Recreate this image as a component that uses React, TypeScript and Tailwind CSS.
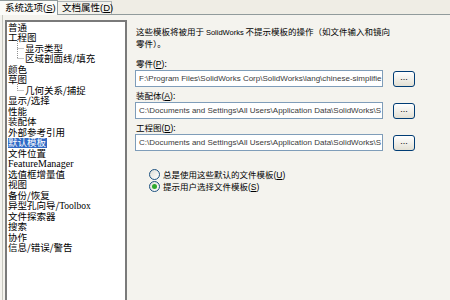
import React from "react";

const cjk = '"Noto Sans CJK SC", "Liberation Sans", sans-serif';

type Item = { label: React.ReactNode; child?: "mid" | "last" | "single"; selected?: boolean };

const items: Item[] = [
  { label: "普通" },
  { label: "工程图" },
  { label: "显示类型", child: "mid" },
  { label: "区域剖面线/填充", child: "last" },
  { label: "颜色" },
  { label: "草图" },
  { label: "几何关系/捕捉", child: "single" },
  { label: "显示/选择" },
  { label: "性能" },
  { label: "装配体" },
  { label: "外部参考引用" },
  { label: "默认模板", selected: true },
  { label: "文件位置" },
  { label: <span className="font-['Liberation_Serif'] text-[10px]">FeatureManager</span> },
  { label: "选值框增量值" },
  { label: "视图" },
  { label: "备份/恢复" },
  { label: <>异型孔向导/<span className="font-['Liberation_Serif']">Toolbox</span></> },
  { label: "文件探索器" },
  { label: "搜索" },
  { label: "协作" },
  { label: "信息/错误/警告" },
];

function Connector({ kind }: { kind: "mid" | "last" | "single" }) {
  return (
    <svg width="17" height="11" className="shrink-0 overflow-visible" viewBox="0 0 17 11">
      <line
        x1="9.5"
        y1={kind === "mid" ? -4 : kind === "single" ? -3 : 0}
        x2="9.5"
        y2={kind === "mid" ? 11 : 5.5}
        stroke="#909090"
        strokeDasharray="1 1"
      />
      <line x1="9.5" y1="5.5" x2="16" y2="5.5" stroke="#909090" strokeDasharray="1 1" />
    </svg>
  );
}

function U({ c }: { c: string }) {
  return (
    <span style={{ fontFamily: '"Liberation Sans", sans-serif' }}>
      (<span className="underline">{c}</span>)
    </span>
  );
}

function PathRow({ text }: { text: string }) {
  return (
    <div className="flex items-center">
      <div className="w-[248px] h-[17px] bg-white border border-[#7f9db9] overflow-hidden whitespace-nowrap pl-[3px] flex items-center text-[8px] text-[#3a3a3a] font-['Liberation_Sans']">
        <span className="block whitespace-nowrap leading-none">{text}</span>
      </div>
      <div className="ml-[10px] w-[22px] h-[16px] rounded-[3px] border border-[#003c74] bg-gradient-to-b from-white to-[#e3e0d4] flex items-center justify-center text-[9px] text-black font-['Liberation_Sans'] leading-none pb-[2px] shrink-0">
        ...
      </div>
    </div>
  );
}

function Radio({ checked }: { checked?: boolean }) {
  return (
    <span className="w-[11px] h-[11px] rounded-full border border-[#1c5180] bg-gradient-to-br from-[#dcdcd6] to-white flex items-center justify-center shrink-0">
      {checked && <span className="w-[5px] h-[5px] rounded-full bg-[#2ea82e]" />}
    </span>
  );
}

export default function App() {
  return (
    <div className="w-[450px] h-[300px] overflow-hidden flex flex-col bg-[#f4f3ee] text-black" style={{ fontFamily: cjk }}>
      {/* tab strip */}
      <div className="h-[15px] flex items-end bg-[#efede5] border-b border-[#919b9c] shrink-0">
        <div className="h-[15px] w-[58px] bg-[#fbfbf8] border-r border-t border-[#919b9c] flex items-center pl-[5px] text-[9.5px] leading-none -mb-[1px] relative z-10 whitespace-nowrap">
          系统选项<U c="S" />
        </div>
        <div className="h-[13px] w-[54px] bg-[#f3f2ec] border-r border-t border-[#b0b6b8] flex items-center pl-[4px] text-[9.5px] leading-none whitespace-nowrap">
          文档属性<U c="D" />
        </div>
      </div>

      <div className="flex-1 flex min-h-0 border-l border-[#c8c8c0] ml-[2px]">
        {/* tree */}
        <div className="w-[122px] ml-[2px] mt-[5px] bg-white border-2 border-[#7a7a7a] border-b-0 shrink-0 pl-[1px]">
          {items.map((it, i) => (
            <div key={i} className="h-[10.5px] flex items-center text-[9.5px] leading-none whitespace-nowrap">
              {it.child && <Connector kind={it.child} />}
              <span
                className={
                  it.selected
                    ? "bg-[#316ac5] text-white h-[10.5px] flex items-center pr-[1px] leading-none"
                    : "block leading-none"
                }
              >
                {it.label}
              </span>
            </div>
          ))}
        </div>

        {/* right */}
        <div className="flex-1 pl-[8px] pt-[11px] text-[8.5px]">
          <div className="leading-[10px] pl-[1px] whitespace-nowrap">
            这些模板将被用于 <span className="font-['Liberation_Sans'] text-[7.5px]">SolidWorks</span> 不提示模板的操作（如文件输入和镜向
            <br />
            零件）。
          </div>
          <div className="mt-[10px] leading-[10px] pl-[1px]">
            零件<U c="P" />:
          </div>
          <div className="mt-[1px]">
            <PathRow text="F:\Program Files\SolidWorks Corp\SolidWorks\lang\chinese-simplifie" />
          </div>
          <div className="mt-[3px] leading-[10px] pl-[1px]">
            装配体<U c="A" />:
          </div>
          <div className="mt-[1px]">
            <PathRow text="C:\Documents and Settings\All Users\Application Data\SolidWorks\S" />
          </div>
          <div className="mt-[3px] leading-[10px] pl-[1px]">
            工程图<U c="D" />:
          </div>
          <div className="mt-[1px]">
            <PathRow text="C:\Documents and Settings\All Users\Application Data\SolidWorks\S" />
          </div>
          <div className="mt-[18px] pl-[14px] flex flex-col gap-[1px]">
            <div className="flex items-center gap-[3px] h-[11px]">
              <Radio />
              <span className="leading-none">总是使用这些默认的文件模板<U c="U" /></span>
            </div>
            <div className="flex items-center gap-[3px] h-[11px]">
              <Radio checked />
              <span className="leading-none">提示用户选择文件模板<U c="S" /></span>
            </div>
          </div>
        </div>
      </div>
    </div>
  );
}
